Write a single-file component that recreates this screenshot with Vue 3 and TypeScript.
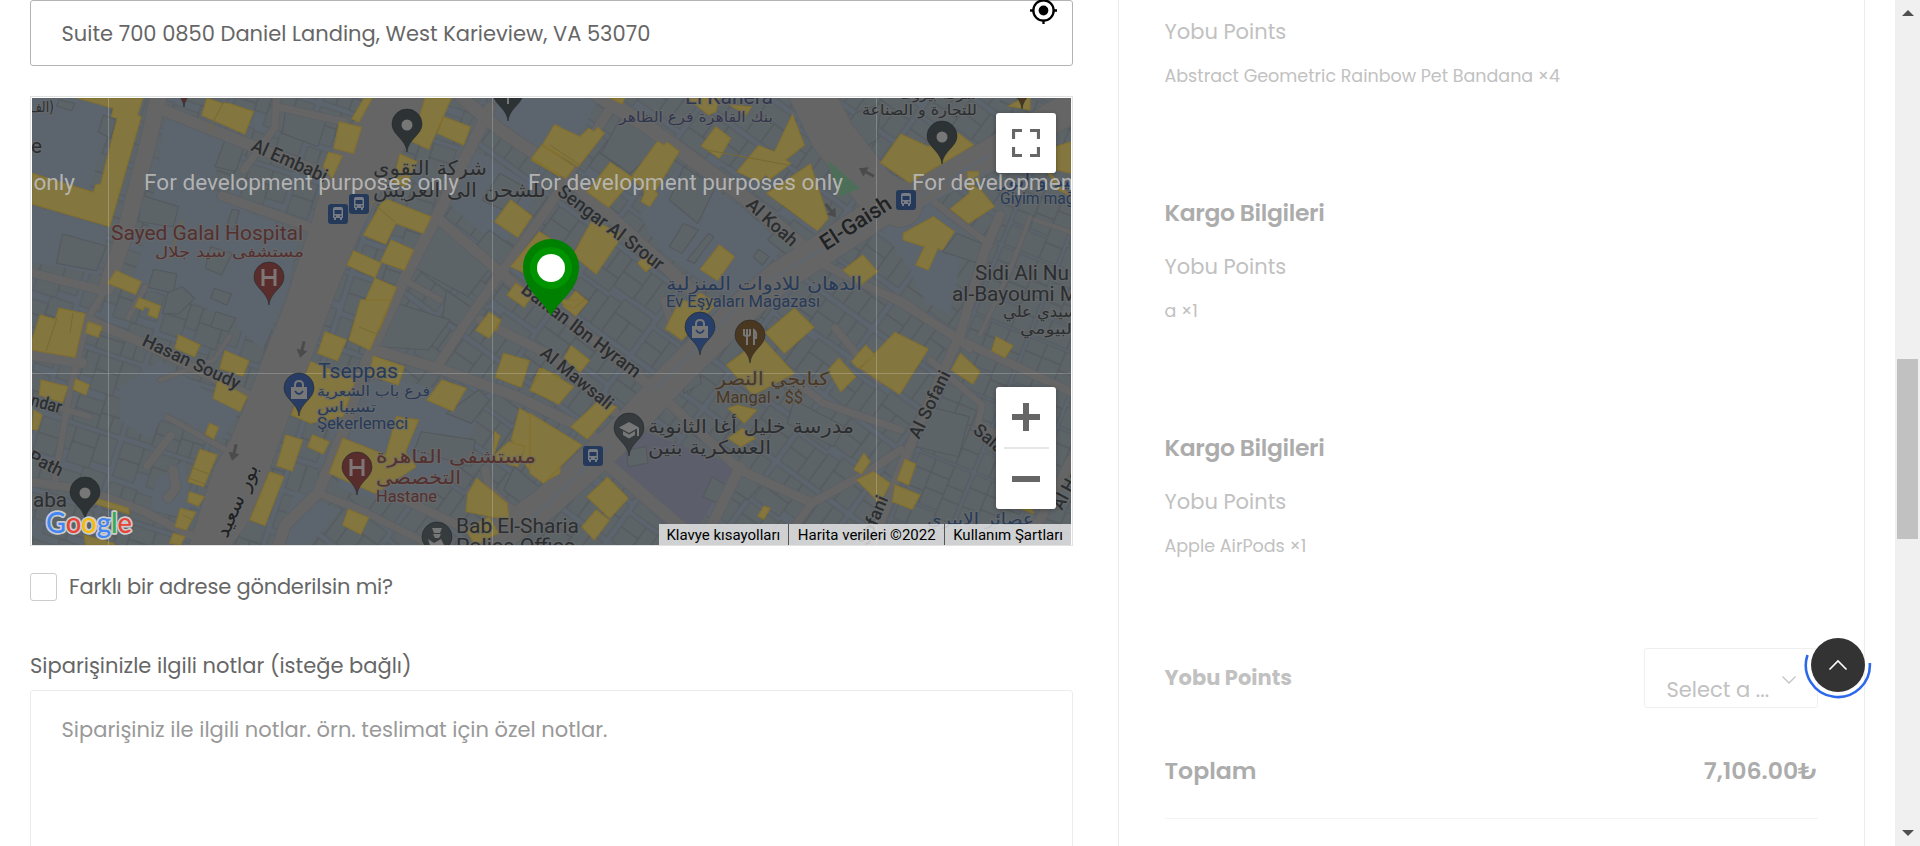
<script setup lang="ts">
interface Quad { t: string; shapes: string[] }
interface Road { d: string; w: number }
interface Label { x: number; y: number; s: number; len: number; text: string; c: string; rot?: number; w?: number; ar?: boolean }
interface Pin { x: number; y: number; c: string; kind: string }

const tl = 'scale(.35714 .33333)'
const tr = 'translate(530 0) scale(.35714 .33333)'
const bl = 'translate(0 300) scale(.35714 .33333)'
const br = 'translate(530 300) scale(.35714 .33333)'

const plain: string[] = [
  '32,98 98,98 112,118 88,192 32,174', '32,206 108,228 98,275 32,262',
  '165,118 228,142 208,192 236,206 300,234 285,300 262,350 230,320 180,296 130,288 148,230',
  '120,385 160,360 205,390 240,410 222,440 165,412 150,440 120,420',
  '600,460 620,440 735,466 715,510 686,522', '640,215 680,165 745,210 785,245 740,300 712,290 660,250',
  '807,98 830,98 850,150 905,185 880,205 860,180 830,130', '330,430 345,385 400,380 485,400 460,460 420,510 340,490',
  '445,200 475,150 540,190 500,250', '680,310 750,295 705,350', '882,230 925,200 975,242 960,262 950,316 925,302 910,270',
  '484,125 500,98 600,98 560,170', '275,545 295,490 340,510 310,545', '155,480 185,460 190,520 150,510'
]

const buildings: Quad[] = [
  { t: tl, shapes: ['175,702 298,738 270,812 158,790', '630,420 685,436 660,515 602,500', '395,585 500,620 485,680 388,665', '430,808 495,822 485,880 415,862', '510,860 545,895 500,942 455,940 470,880', '600,865 648,882 635,915 590,895', '650,628 670,632 655,690 635,680', '590,740 650,760 620,825 575,805', '290,345 325,360 310,415 275,395', '165,300 210,310 200,332 158,318', '800,330 915,355 890,440 790,400', '1400,520 1475,565 1430,640 1350,600', '1220,672 1390,780 1310,890 1165,805', '1370,690 1440,745 1400,800 1330,740', '1250,870 1330,930 1300,990 1240,950'] },
  { t: tr, shapes: ['255,350 340,370 400,410 280,520 200,460', '430,670 472,690 425,760 390,740', '500,700 515,710 460,790 440,780', '640,748 670,770 650,795 625,770', '700,680 765,730 720,765 665,720', '430,500 520,560 470,670 390,600', '880,385 910,340 985,310 970,420 930,450', '1195,700 1285,740 1255,790 1155,755', '560,960 650,850 700,870 640,960'] },
  { t: bl, shapes: ['1180,395 1330,420 1320,500 1160,450', '605,35 660,55 640,95 590,80', '1440,500 1520,570 1460,610 1410,570', '1250,340 1340,270 1370,300 1320,370', '1060,140 1110,10 1260,60 1200,150'] },
  { t: br, shapes: ['270,450 325,440 330,490 275,500', '510,530 555,560 530,612 485,590', '590,530 630,520 650,550 610,600 570,570', '440,215 470,200 480,250 430,280', '740,300 880,380 850,440 720,370', '1120,320 1230,350 1200,470 1080,440'] }
]

const yellows: Quad[] = [
  { t: tl, shapes: [
    '215,294 400,294 385,345 395,350 307,680 90,612 90,520 262,577 268,555 282,552 328,355 312,350 318,325',
    '580,294 620,310 640,310 710,335 685,402 565,346', '1020,294 1042,294 1005,366 985,356', '950,365 1012,382 990,460 935,445',
    '920,457 958,468 930,535 905,500', '1190,294 1264,294 1200,448 1155,425', '1242,350 1317,380 1298,435 1225,400',
    '1120,462 1168,485 1135,560 1100,545', '1075,595 1207,650 1185,700 1108,670 1080,732 1018,705', '1095,720 1158,750 1132,810 1066,785',
    '990,752 1067,790 1050,833 972,795', '1050,835 1110,862 1062,990 992,990 1015,920', '325,812 395,845 380,883 302,850',
    '390,893 450,918 440,955 415,945 420,925 405,920 400,930 378,920', '165,925 235,940 215,990 100,990 115,945 155,960',
    '245,970 285,985 285,990 242,990', '1430,600 1490,648 1450,712 1385,665', '1555,375 1568,380 1568,530 1488,480 1520,435',
    '1510,695 1568,735 1550,820 1490,830 1430,800', '1445,850 1490,885 1468,922 1420,885', '1370,940 1400,965 1390,990 1335,990'] },
  { t: tr, shapes: [
    '68,375 140,410 165,385 180,395 190,382 208,400 135,500 35,435', '33,435 125,500 100,535 5,475', '225,487 290,535 220,622 160,575',
    '357,425 375,435 385,427 417,455 350,575 358,582 335,620 312,605 322,575 285,530', '520,380 562,415 530,475 480,438',
    '735,343 768,435 715,480 730,490 672,537 660,525 640,545 580,515 640,437 685,455', '785,492 835,655 805,692 663,580',
    '1038,402 1115,440 1200,400 1242,435 1063,548 982,488', '175,660 260,705 185,822 120,765', '530,735 572,770 525,842 477,808',
    '320,765 348,790 325,815 302,790', '128,873 162,905 128,948 92,917', '932,765 973,815 925,855 877,810',
    '1225,515 1255,515 1258,545 1240,540 1245,560 1262,570 1300,620 1228,670 1177,627 1230,580', '1130,650 1188,695 1155,750 1142,745 1115,810 1080,795 1105,740 1045,720 1045,700',
    '440,294 530,294 520,335 500,345', '560,315 620,320 605,345', '1370,300 1400,294 1400,330 1340,318', '1470,440 1515,425 1515,520 1475,510', '1440,500 1490,560 1515,590 1480,570', '225,294 265,294 258,312', '475,880 520,905 500,930 400,990 380,990'] },
  { t: bl, shapes: [
    '165,25 238,42 210,172 90,150 90,120 112,45 155,58', '247,65 285,80 275,112 240,98', '500,105 560,135 545,170 490,145',
    '630,152 697,182 680,228 615,205', '610,240 692,290 672,335 597,295', '115,240 190,260 175,308 110,285', '212,237 250,255 240,285 205,268',
    '95,330 118,345 105,390 90,388', '587,370 612,382 598,417 575,402', '560,448 608,465 570,560 527,545', '530,575 572,590 555,618 525,605',
    '505,625 548,637 522,690 490,680', '485,700 518,710 505,735 475,730', '755,515 795,530 742,677 700,660', '800,405 847,420 818,513 775,497',
    '875,405 922,425 905,462 862,440', '870,185 995,240 960,350 870,370 815,345', '1010,0 1095,0 1035,150 977,120', '910,95 970,120 945,182 890,160',
    '1045,168 1132,200 1115,255 1035,225', '1237,240 1305,265 1268,333 1195,300', '1370,38 1402,60 1370,115 1332,90', '1410,160 1482,182 1460,262 1387,232',
    '1510,205 1568,230 1568,310 1485,270', '960,415 1080,465 1110,350 1172,360 1135,455 1165,500 1050,580 922,520',
    '1455,325 1568,400 1568,520 1520,548 1475,500 1432,420', '1385,395 1400,408 1380,470 1425,425 1470,440 1450,500 1380,480',
    '975,628 1032,653 1010,703 960,675', '1335,535 1420,610 1425,660 1305,635 1310,580', '1370,650 1395,700 1330,735 1305,690', '270,595 360,625 362,642 268,612', '235,705 320,730 320,735 240,735'] },
  { t: br, shapes: [
    '35,205 122,260 80,312 0,270', '115,137 167,180 140,217 95,175', '190,305 242,320 160,417 115,380', '0,340 145,435 38,550 0,520',
    '217,532 275,595 223,655 160,590', '185,630 222,660 180,720 145,680', '420,0 515,20 425,120 380,85', '740,25 795,82 712,160 660,98',
    '650,115 740,220 625,285 550,195', '1022,97 1115,147 1035,283 925,205', '940,135 965,165 920,205 900,185', '865,175 912,230 870,275 835,210',
    '1205,160 1260,215 1240,252 1180,210', '1305,110 1352,137 1330,173 1293,152', '580,315 635,330 600,370 555,325', '595,385 630,415 590,440 555,415',
    '935,460 952,485 928,522 907,508', '962,515 1008,550 980,610 915,540', '1050,478 1080,492 1060,555 1028,540', '1022,555 1092,585 1070,628 1015,605',
    '655,618 672,625 655,658 638,648', '1400,610 1410,640 1370,625', '90,0 155,0 122,25 90,10'] }
]

const roads: Road[] = [
  { d: 'M160 90 148 143 125 233 107 287', w: 16 }, { d: 'M107 287 88 318 70 390 55 480', w: 6 },
  { d: 'M155 107 250 145 330 176', w: 11 }, { d: 'M277 90 275 127 244 170', w: 7 }, { d: 'M278 107 345 122', w: 7 },
  { d: 'M32 273 100 290', w: 8 }, { d: 'M84 318 143 343 250 396', w: 9 }, { d: 'M222 196 312 228', w: 9 },
  { d: 'M32 355 82 363', w: 10 }, { d: 'M60 408 90 417', w: 5 }, { d: 'M32 482 86 490 143 511 190 535', w: 8 },
  { d: 'M167 417 224 449', w: 5 }, { d: 'M171 435 147 466', w: 7 }, { d: 'M173 470 176 488 168 498', w: 9 },
  { d: 'M230 336 214 360 160 380', w: 4 }, { d: 'M145 287 128 318', w: 5 },
  { d: 'M490 108 440 210 404 280 365 365 343 433 318 493 285 525 277 550', w: 11 },
  { d: 'M462 98 500 130 559 170 662 263 705 303', w: 12 }, { d: 'M590 90 648 127 744 197 800 245', w: 14 },
  { d: 'M608 112 550 205 496 280 464 325 435 370', w: 9 }, { d: 'M436 217 521 290 570 320 655 390', w: 10 },
  { d: 'M375 350 443 370 518 397 580 427 612 450', w: 10 }, { d: 'M480 320 550 355 615 412', w: 9 }, { d: 'M404 280 440 300', w: 6 },
  { d: 'M485 545 541 507 615 440 673 377 744 307 780 277 826 247 887 207 987 157 1075 105', w: 31 },
  { d: 'M810 90 832 135 875 190 900 205', w: 44 }, { d: 'M925 195 990 245', w: 6 },
  { d: 'M825 265 900 302 960 340 1071 392', w: 8 }, { d: 'M1000 215 985 250 960 335 930 400 900 470 870 550', w: 9 },
  { d: 'M650 385 740 470 812 503', w: 9 }, { d: 'M740 467 700 550', w: 10 }, { d: 'M600 458 690 535', w: 12 },
  { d: 'M812 503 866 473 901 450', w: 8 }, { d: 'M790 377 823 403 901 430', w: 7 }, { d: 'M835 328 880 382', w: 7 },
  { d: 'M705 330 670 320 664 300', w: 7 }, { d: 'M930 360 982 405 978 425 1010 440', w: 6 }, { d: 'M840 275 903 300 970 350', w: 5 },
  { d: 'M1030 217 1010 270 980 335', w: 4 }, { d: 'M1035 220 1071 232', w: 4 }, { d: 'M1071 460 1040 520 1020 550', w: 9 },
  { d: 'M405 500 500 545', w: 8 }, { d: 'M485 470 490 490 525 522', w: 8 }, { d: 'M318 493 365 512 430 545', w: 7 }, { d: 'M812 503 780 545', w: 7 }
]

const gray = '#2b2e31', navy = '#263a5a', wine = '#54302f', brown = '#4a3823'
const labels: Label[] = [
  { x: 250, y: 150, s: 19, len: 81, text: 'Al Embabi', c: gray, rot: 24, w: 500 },
  { x: 111, y: 240, s: 21, len: 192, text: 'Sayed Galal Hospital', c: wine },
  { x: 155, y: 257, s: 15, len: 149, text: 'مستشفى سيد جلال', c: wine, ar: true },
  { x: 373, y: 175, s: 20, len: 114, text: 'شركة التقوى', c: gray, ar: true },
  { x: 373, y: 197, s: 20, len: 173, text: 'للشحن الى العريش', c: gray, ar: true },
  { x: 556, y: 194, s: 19, len: 128, text: 'Sengar Al Srour', c: gray, rot: 37, w: 500 },
  { x: 745, y: 206, s: 18, len: 62, text: 'Al Koah', c: gray, rot: 42, w: 500 },
  { x: 826, y: 251, s: 22, len: 80, text: 'El-Gaish', c: '#202224', rot: -33, w: 500 },
  { x: 520, y: 292, s: 19, len: 144, text: 'Balkan Ibn Hyram', c: gray, rot: 37, w: 500 },
  { x: 539, y: 355, s: 18, len: 88, text: 'Al Mawsali', c: gray, rot: 39, w: 500 },
  { x: 141, y: 345, s: 18, len: 106, text: 'Hasan Soudy', c: gray, rot: 25, w: 500 },
  { x: 685, y: 104, s: 20, len: 88, text: 'El Kahera', c: '#31364f' },
  { x: 619, y: 122, s: 14, len: 154, text: 'بنك القاهرة فرع الظاهر', c: '#31364f', ar: true },
  { x: 899, y: 99, s: 15, len: 78, text: 'شركة بيروت', c: gray, ar: true },
  { x: 862, y: 115, s: 15, len: 115, text: 'للتجارة و الصناعة', c: gray, ar: true },
  { x: 666, y: 290, s: 18, len: 196, text: 'الدهان للادوات المنزلية', c: navy, ar: true },
  { x: 666, y: 307, s: 16, len: 154, text: 'Ev Eşyaları Mağazası', c: navy },
  { x: 975, y: 280, s: 21, len: 94, text: 'Sidi Ali Nu', c: gray },
  { x: 952, y: 301, s: 21, len: 126, text: 'al-Bayoumi M', c: gray },
  { x: 1003, y: 317, s: 16, len: 74, text: 'سيدي علي', c: gray, ar: true },
  { x: 1020, y: 334, s: 15, len: 57, text: 'البيومي', c: gray, ar: true },
  { x: 998, y: 187, s: 18, len: 90, text: 'سيد و ابور', c: navy, ar: true },
  { x: 1000, y: 204, s: 16, len: 83, text: 'Giyim mağa', c: navy },
  { x: 318, y: 378, s: 21, len: 80, text: 'Tseppas', c: navy },
  { x: 317, y: 396, s: 14, len: 113, text: 'فرع باب الشعرية', c: navy, ar: true },
  { x: 317, y: 412, s: 14, len: 59, text: 'تسيباس', c: navy, ar: true },
  { x: 317, y: 429, s: 16, len: 91, text: 'Şekerlemeci', c: navy },
  { x: 376, y: 463, s: 19, len: 160, text: 'مستشفى القاهرة', c: wine, ar: true },
  { x: 376, y: 484, s: 19, len: 85, text: 'التخصصى', c: wine, ar: true },
  { x: 376, y: 502, s: 16, len: 61, text: 'Hastane', c: wine },
  { x: 716, y: 385, s: 18, len: 113, text: 'كبابجي النصر', c: brown, ar: true },
  { x: 716, y: 403, s: 17, len: 87, text: 'Mangal • $$', c: brown },
  { x: 648, y: 433, s: 19, len: 206, text: 'مدرسة خليل أغا الثانوية', c: gray, ar: true },
  { x: 648, y: 454, s: 19, len: 123, text: 'العسكرية بنين', c: gray, ar: true },
  { x: 456, y: 533, s: 21, len: 123, text: 'Bab El-Sharia', c: gray },
  { x: 456, y: 553, s: 21, len: 119, text: 'Police Office', c: gray },
  { x: 227, y: 539, s: 20, len: 78, text: 'بور سعيد', c: '#202224', rot: -66, ar: true },
  { x: 919, y: 440, s: 18, len: 73, text: 'Al Sofani', c: gray, rot: -64, w: 500 },
  { x: 860, y: 566, s: 18, len: 73, text: 'Al Sofani', c: gray, rot: -67, w: 500 },
  { x: 972, y: 432, s: 18, len: 50, text: 'Salam', c: gray, rot: 40, w: 500 },
  { x: 1062, y: 511, s: 18, len: 60, text: 'Al Hoda', c: gray, rot: -62, w: 500 },
  { x: 927, y: 525, s: 17, len: 107, text: 'عصائر الابيري', c: navy, ar: true },
  { x: 2, y: 398, s: 18, len: 60, text: 'Iskandar', c: gray, rot: 15, w: 500 },
  { x: 27, y: 461, s: 18, len: 36, text: 'Path', c: gray, rot: 26, w: 500 },
  { x: 33, y: 507, s: 20, len: 34, text: 'aba', c: gray },
  { x: 31, y: 153, s: 21, len: 11, text: 'e', c: gray },
  { x: 24, y: 112, s: 15, len: 30, text: '(الف)', c: gray, ar: true }
]

const pins: Pin[] = [
  { x: 407, y: 152, c: '#2d3234', kind: 'dot' }, { x: 508, y: 121, c: '#2d3234', kind: 'mosque' }, { x: 942, y: 164, c: '#2d3234', kind: 'dot' },
  { x: 269, y: 305, c: '#582d2c', kind: 'H' }, { x: 357, y: 495, c: '#582d2c', kind: 'H' }, { x: 299, y: 416, c: '#283c64', kind: 'bag' },
  { x: 700, y: 355, c: '#283f6a', kind: 'bag' }, { x: 750, y: 363, c: '#493720', kind: 'fork' }, { x: 629, y: 456, c: '#363b3d', kind: 'cap' },
  { x: 85, y: 520, c: '#2d3234', kind: 'dot' }, { x: 437, y: 565, c: '#363b3d', kind: 'police' }, { x: 184, y: 107, c: '#582d2c', kind: 'none' },
  { x: 1022, y: 109, c: '#493720', kind: 'none' }
]
const buses = [[338, 214], [359, 204], [906, 200], [593, 456]]
const arrows = [{ x: 302, y: 350, r: 14 }, { x: 234, y: 453, r: 14 }, { x: 866, y: 172, r: 118 }, { x: 831, y: 211, r: -38 }]
const marks = [-240, 144, 528, 912]
const credits = ['Klavye kısayolları', 'Harita verileri ©2022', 'Kullanım Şartları']
const parcels = [
  { id: 0, title: '', item: 'Abstract Geometric Rainbow Pet Bandana ×4' },
  { id: 1, title: 'Kargo Bilgileri', item: 'a ×1' },
  { id: 2, title: 'Kargo Bilgileri', item: 'Apple AirPods ×1' }
]
</script>

<template>
  <div class="page">
    <main class="form">
      <div class="address">
        <span>Suite 700 0850 Daniel Landing, West Karieview, VA 53070</span>
        <svg class="locate" viewBox="0 0 26 26"><circle cx="13" cy="13" r="9.8" /><path d="M13 0v4M13 22v4M0 13h4M22 13h4" /><circle class="core" cx="13" cy="13" r="4.7" /></svg>
      </div>

      <div class="map">
        <svg class="canvas" viewBox="32 98 1039 447">
          <defs>
            <pattern id="lotsA" width="84" height="76" patternUnits="userSpaceOnUse" patternTransform="rotate(18)">
              <path class="lot" d="M2 2h22v17H2zM24 2h13v24H24zM37 2h24v15H37zM61 2h19v28H61zM2 19h22v19H2zM37 17h24v21H37zM2 44h14v28H2zM16 44h14v28H16zM30 46h26v14H30zM30 60h26v13H30zM56 38h24v19H56zM56 57h13v16H56zM69 57h11v16H69z" />
            </pattern>
            <pattern id="lotsB" width="90" height="82" patternUnits="userSpaceOnUse" patternTransform="rotate(36)">
              <path class="lot" d="M2 2h17v24H2zM19 2h15v24H19zM34 2h24v15H34zM58 2h14v31H58zM72 2h14v31H72zM34 17h24v17H34zM2 26h32v16H2zM2 47h21v14H2zM2 61h21v17H2zM23 47h14v31H23zM37 44h14v34H37zM51 39h35v16H51zM51 55h18v23H51zM69 55h17v23H69z" />
            </pattern>
            <pattern id="lotsC" width="60" height="74" patternUnits="userSpaceOnUse" patternTransform="rotate(22)">
              <path class="lot" d="M2 1h18v14H2zM20 1h20v14H20zM40 1h18v20H40zM2 15h18v20H2zM20 15h20v16H20zM40 21h18v14H40zM20 31h20v17H20zM2 35h18v13H2zM40 35h18v20H40zM2 51h14v21H2zM16 51h24v21H16zM40 55h18v17H40z" />
            </pattern>
          </defs>
          <rect class="ground" x="32" y="98" width="1039" height="447" />
          <path fill="url(#lotsA)" d="M32 98H480L350 400 285 545H32z" />
          <path fill="url(#lotsB)" d="M480 98H1000V230L960 335 870 545H285L350 400z" />
          <path fill="url(#lotsC)" d="M1000 98H1071V545H870L960 335 1000 230z" />
          <polygon v-for="(p, i) in plain" :key="'p' + i" class="ground" :points="p" />
          <polygon class="school" points="606,464 640,430 735,466 695,532 660,522" />
          <g v-for="(q, i) in buildings" :key="'b' + i" :transform="q.t"><polygon v-for="(s, j) in q.shapes" :key="j" class="building" :points="s" /></g>
          <path v-for="(r, i) in roads" :key="'e' + i" class="edge" :d="r.d" :stroke-width="r.w + 2" />
          <polygon class="edge-fill" points="371,98 332,150 311,223 293,277 286,300 262,360 246,403 229,443 214,467 189,545 232,545 250,520 266,480 289,417 311,360 332,303 354,247 375,203 404,150 429,98" />
          <path v-for="(r, i) in roads" :key="'r' + i" class="road" :d="r.d" :stroke-width="r.w" />
          <g v-for="(q, i) in yellows" :key="'y' + i" :transform="q.t"><polygon v-for="(s, j) in q.shapes" :key="j" class="shop" :points="s" /></g>
          <path class="shop-line" d="M223 103 209 130M369 200 395 222M359 327 379 335M57 318 46 351M73 313 70 333M190 467 209 474M186 477 205 484M182 219 170 260M183 515 193 520M550 145 580 165M707 150 788 165" />
          <polygon class="park" points="827,160 860,188 840,197" />
          <path class="lane" d="M530 520 610 445M655 390 735 310M770 280 830 245M905 205 990 155M925 205 990 170" />
          <g v-for="(a, i) in arrows" :key="'a' + i" :transform="`translate(${a.x} ${a.y}) rotate(${a.r})`"><path class="arrow" d="M-1.5-9h3v9h4L0 8-5.5 0h4z" /></g>
          <path class="grid" d="M108.5 98V545M492.5 98V545M876.5 98V545M32 373.5H1071" />

          <g v-for="(l, i) in labels" :key="'l' + i" :transform="`translate(${l.x} ${l.y}) rotate(${l.rot ?? 0})`">
            <text class="label" :class="{ arabic: l.ar }" :x="l.ar ? l.len : 0" :direction="l.ar ? 'rtl' : 'ltr'" :font-size="l.s" :font-weight="l.w ?? 400" :fill="l.c" :textLength="l.len" lengthAdjust="spacingAndGlyphs">{{ l.text }}</text>
          </g>
          <text v-for="m in marks" :key="m" class="mark" :x="m" y="189.5" textLength="315" lengthAdjust="spacingAndGlyphs">For development purposes only</text>

          <g v-for="(b, i) in buses" :key="'s' + i" :transform="`translate(${b[0]} ${b[1]})`">
            <rect class="bus-bg" x="-10" y="-10" width="20" height="20" rx="3" />
            <path class="bus" fill-rule="evenodd" d="M-5-5Q-5-7-3-7H3Q5-7 5-5V4H4V6H2V4H-2V6H-4V4H-5zM-3.5-4V0H3.500V-4zM-3.500 1.500v1.400h1.400V1.500zM2.100 1.500v1.400h1.400V1.500z" />
          </g>

          <g v-for="(p, i) in pins" :key="'n' + i" :transform="`translate(${p.x} ${p.y})`">
            <path class="pin" :fill="p.c" d="M0 0C-1-13-15-17-15-28A15 15 0 0 1 15-28C15-17 1-13 0 0z" />
            <circle v-if="p.kind === 'dot'" class="glyph" cy="-27" r="5.500" />
            <path v-else-if="p.kind === 'H'" class="glyph-line" d="M-6-36V-19M6-36V-19M-6-27.500H6" />
            <g v-else-if="p.kind === 'bag'"><path class="glyph" d="M-8-29H8V-17H-8z" /><path class="thin" d="M-4-29V-31Q-4-35 0-35T4-31V-29" /><path class="smile" :stroke="p.c" d="M-4-25Q0-19 4-25" /></g>
            <path v-else-if="p.kind === 'fork'" class="thin" d="M-6-34V-28Q-3-26 0-28V-34M-3-34V-18M4-18V-33Q7-31 6-25H4" />
            <g v-else-if="p.kind === 'cap'"><path class="glyph" d="M0-34 10-28.500 0-23-10-28.500zM-6-25 0-21.500 6-25V-21L0-17.500-6-21z" /><path class="thin" d="M9-28V-20" /></g>
            <g v-else-if="p.kind === 'police'"><path class="glyph" d="M-5-37H5L3-32H-3zM-4-31H4L2-27H-2zM-9-26-3-22 4-26 7-20 1-13H-5z" /></g>
            <path v-else-if="p.kind === 'mosque'" class="thin" d="M0-27V-17" />
          </g>

          <path class="marker" d="M551 316C543 300 523 290 523 267A28 28 0 0 1 579 267C579 290 559 300 551 316z" />
          <circle class="marker-ring" cx="551" cy="268" r="21" />
          <circle class="marker-hole" cx="551" cy="268" r="14" />

          <text class="google" x="46" y="533" textLength="86" lengthAdjust="spacingAndGlyphs"><tspan class="g-blue">G</tspan><tspan class="g-red">o</tspan><tspan class="g-yellow">o</tspan><tspan class="g-blue">g</tspan><tspan class="g-green">l</tspan><tspan class="g-red">e</tspan></text>
        </svg>
        <button class="control full" type="button" aria-label="Fullscreen"><svg viewBox="0 0 28 28"><path d="M1.500 10V1.500H10M18 1.500h8.500V10M26.500 18v8.500H18M10 26.500H1.500V18" /></svg></button>
        <div class="control zoom">
          <svg viewBox="0 0 28 28"><path class="thick" d="M14 0V28M0 14H28" /></svg>
          <i></i>
          <svg viewBox="0 0 28 28"><path class="thick" d="M0 14H28" /></svg>
        </div>
        <div class="credits"><span v-for="c in credits" :key="c">{{ c }}</span></div>
      </div>

      <label class="check"><span class="box"></span><span class="t-check">Farklı bir adrese gönderilsin mi?</span></label>
      <div class="notes-label"><span>Siparişinizle ilgili notlar (isteğe bağlı)</span></div>
      <div class="notes"><span>Siparişiniz ile ilgili notlar. örn. teslimat için özel notlar.</span></div>
    </main>

    <aside class="summary">
      <section v-for="p in parcels" :key="p.id" class="parcel" :class="{ first: !p.title }">
        <h3 v-if="p.title">{{ p.title }}</h3>
        <p class="vendor">Yobu Points</p>
        <p class="item">{{ p.item }}</p>
      </section>
      <div class="points">
        <strong>Yobu Points</strong>
        <div class="select"><span>Select a ...</span><svg viewBox="0 0 14 8"><path d="M.5.5 7 7 13.500.500" /></svg></div>
      </div>
      <div class="total"><b>Toplam</b><b>7,106.00₺</b></div>
    </aside>

    <div class="to-top">
      <svg viewBox="0 0 70 70"><path class="ring" d="M4.500 25A32 32 0 1 0 66.800 33" /><circle cx="35" cy="35" r="27" /><path class="up" d="M26.500 39.500 35 31 43.500 39.500" /></svg>
    </div>
    <div class="scrollbar"><i class="tri up-tri"></i><i class="thumb"></i><i class="tri down-tri"></i></div>
  </div>
</template>

<style>
body { overflow: hidden; }
</style>

<style scoped>
* { box-sizing: border-box; }
.page { position: relative; display: flex; width: 1920px; height: 846px; overflow: hidden; background: #fff; color: #666; font: 21px/30px Poppins, Inter, "Open Sans", sans-serif; }
.page span, .page b, .page strong { white-space: nowrap; }
.form { width: 1043px; margin-left: 30px; flex: none; }
.address { position: relative; height: 66px; padding: 18px 30.5px; border: 1px solid #b3b3b3; border-radius: 3px; }
.locate { position: absolute; right: 15px; top: -4px; width: 27px; height: 27px; fill: none; stroke: #000; stroke-width: 2.2; }
.locate .core { fill: #000; stroke: none; }
.map { position: relative; height: 450px; margin-top: 30px; padding: 1px; border: 1px solid #e1e1e1; }
.canvas { display: block; width: 1039px; height: 447px; font-family: Roboto, sans-serif; }
.ground { fill: #5c646d; }
.school { fill: #5c5f6b; }
.lot, .building { fill: #5d6467; stroke: #54595d; stroke-width: 1; }
.building { stroke-width: 3; }
.edge { fill: none; stroke: #5c6065; stroke-linejoin: round; stroke-linecap: round; }
.road { fill: none; stroke: #656565; stroke-linejoin: round; stroke-linecap: round; }
.edge-fill { fill: #656565; stroke: #5c6065; stroke-width: 1; }
.shop { fill: #83763e; stroke: #84702d; stroke-width: 3; }
.shop-line { stroke: #766932; fill: none; }
.park { fill: #4d6f59; }
.lane { stroke: #5b6878; stroke-width: 1.2; fill: none; }
.arrow { fill: #4b4b4b; }
.grid { fill: none; stroke: #fff; stroke-opacity: .22; }
.mark { font-size: 22px; fill: #bdbdbd; fill-opacity: .9; }
.label { paint-order: stroke; stroke: #6b6b6b; stroke-opacity: .6; stroke-width: 2.4px; }
.arabic { font-family: "DejaVu Sans", sans-serif; }
.bus-bg { fill: #253a5a; }
.bus { fill: #777c85; }
.pin { stroke: #24292c; stroke-width: .6; }
.glyph { fill: #777; }
.glyph-line { fill: none; stroke: #7e7676; stroke-width: 3; }
.thin { fill: none; stroke: #777; stroke-width: 2; }
.smile { fill: none; stroke-width: 1.8; }
.marker { fill: #008000; }
.marker-ring { fill: #009400; }
.marker-hole { fill: #fff; }
.google { font: 500 29px Lato, sans-serif; paint-order: stroke; stroke: #c9cccf; stroke-width: 3.5px; stroke-linejoin: round; }
.g-blue { fill: #4285f4; }
.g-red { fill: #ea4335; }
.g-yellow { fill: #fbbc05; }
.g-green { fill: #34a853; }
.control { position: absolute; right: 16px; width: 60px; padding: 0; border: 0; border-radius: 3px; background: #fff; box-shadow: 0 1px 5px rgba(0, 0, 0, .3); }
.control svg { display: block; width: 28px; height: 28px; fill: none; stroke: #666; stroke-width: 3.2; }
.control .thick { stroke-width: 6; }
.full { top: 16px; height: 60px; display: grid; place-items: center; }
.zoom { top: 290px; height: 122px; display: flex; flex-direction: column; align-items: center; justify-content: space-between; padding: 16px 0; }
.zoom i { width: 45px; height: 2px; background: #e6e6e6; }
.credits { position: absolute; right: 1px; bottom: 0; display: flex; height: 21px; background: rgba(245, 245, 245, .75); color: #000; font: 15px/22px Roboto, sans-serif; }
.credits span { padding: 0 8px 0 8.5px; border-left: 1px solid #555; }
.credits span:first-child { border: 0; padding-left: 7px; }
.check { display: flex; height: 28px; margin-top: 27px; align-items: center; }
.box { width: 27px; height: 28px; margin-right: 12px; border: 1px solid #ccc; border-radius: 3px; }
.t-check { letter-spacing: -.2px; }
.notes-label { margin-top: 50px; height: 39px; }
.notes { height: 180px; padding: 24px 30.5px; border: 1px solid #ececec; border-radius: 3px; color: #999; }
.summary { width: 747px; height: 846px; margin-left: 45px; padding: 0 46px 0 45.5px; flex: none; border: solid #ececec; border-width: 0 1px; color: #c1c1c1; }
.parcel { height: 235px; }
.parcel.first { height: 193px; padding-top: 17px; }
h3, p { margin: 0; }
h3 { height: 59px; padding-top: 5px; color: #acacac; font-size: 23.5px; font-weight: 600; line-height: 30px; letter-spacing: -.36px; }
.vendor { height: 44px; line-height: 30px; }
.item { font-size: 17.5px; line-height: 30px; }
.points { display: flex; height: 60px; margin-top: -15px; align-items: center; justify-content: space-between; }
.select { position: relative; display: flex; width: 174px; height: 60px; padding: 26px 21px 0 21.5px; justify-content: space-between; border: 1px solid #efefef; border-radius: 3px; }
.select svg { width: 14px; height: 8px; margin-top: 1px; fill: none; stroke: #c4c4c4; stroke-width: 1.3; }
.total { display: flex; height: 111px; padding-top: 48px; justify-content: space-between; border-bottom: 1px solid #f4f4f4; color: #acacac; font-size: 23.6px; line-height: 30px; }
.total b { font-weight: 600; }
.to-top { position: absolute; left: 1803px; top: 630px; width: 70px; height: 70px; }
.to-top svg { display: block; fill: #333; }
.to-top .ring { fill: none; stroke: #2c69ea; stroke-width: 2.6; }
.to-top .up { fill: none; stroke: #fff; stroke-width: 1.6; }
.scrollbar { position: relative; display: flex; flex-direction: column; align-items: center; width: 25px; height: 846px; margin-left: auto; background: #f0f0f0; }
.thumb { width: 21px; height: 180px; margin-top: 343px; background: #c1c1c1; }
.tri { width: 0; height: 0; border: solid transparent; border-width: 0 6px; }
.up-tri { margin-top: 10px; border-bottom: 6px solid #505050; }
.down-tri { margin-top: auto; margin-bottom: 10px; border-top: 6px solid #505050; }
</style>
